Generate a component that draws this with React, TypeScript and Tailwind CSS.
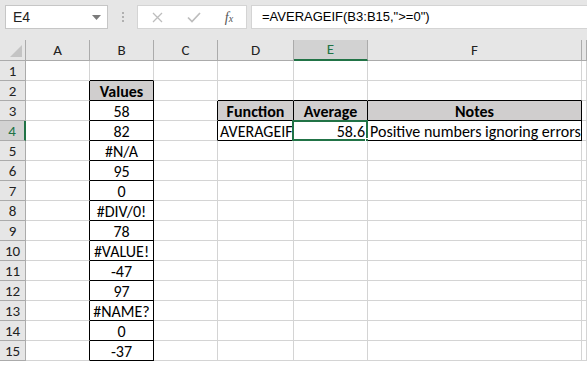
import React from 'react';

const FONT = { fontFamily: 'Carlito, Lato, "Liberation Sans", sans-serif' };

// column widths include the 1px right gridline
const columns = [
  { key: 'A', width: 'w-[64px]' },
  { key: 'B', width: 'w-[64px]' },
  { key: 'C', width: 'w-[64px]' },
  { key: 'D', width: 'w-[76px]' },
  { key: 'E', width: 'w-[74px]' },
  { key: 'F', width: 'w-[214px]' },
  { key: 'G', width: 'flex-1' },
];

type Cell = { text: string; align?: 'left' | 'center' | 'right'; head?: boolean };

const cells: Record<string, Cell> = {
  B2: { text: 'Values', head: true },
  B3: { text: '58' },
  B4: { text: '82' },
  B5: { text: '#N/A' },
  B6: { text: '95' },
  B7: { text: '0' },
  B8: { text: '#DIV/0!' },
  B9: { text: '78' },
  B10: { text: '#VALUE!' },
  B11: { text: '-47' },
  B12: { text: '97' },
  B13: { text: '#NAME?' },
  B14: { text: '0' },
  B15: { text: '-37' },
  D3: { text: 'Function', head: true },
  E3: { text: 'Average', head: true },
  F3: { text: 'Notes', head: true },
  D4: { text: 'AVERAGEIF', align: 'left' },
  E4: { text: '58.6', align: 'right' },
  F4: { text: 'Positive numbers ignoring errors', align: 'left' },
};

const inBox = (col: string, row: number) => {
  if (col === 'B' && row >= 2 && row <= 15) return true;
  if ((col === 'D' || col === 'E' || col === 'F') && (row === 3 || row === 4)) return true;
  return false;
};

const colKeys = columns.map(c => c.key);

function GridCell({ col, row, width }: { col: string; row: number; width: string }) {
  const next = colKeys[colKeys.indexOf(col) + 1];
  const rightBlack = inBox(col, row) || (next ? inBox(next, row) : false);
  const bottomBlack = inBox(col, row) || inBox(col, row + 1);
  const cell = cells[`${col}${row}`];
  const selected = col === 'E' && row === 4;
  const align = cell?.align ?? 'center';

  return (
    <div
      className={`relative h-full shrink-0 border-r border-b flex items-center pt-[2px] px-[2px] text-[16px] text-black ${width}
        ${rightBlack ? 'border-r-black' : 'border-r-[#d4d4d4]'}
        ${bottomBlack ? 'border-b-black' : 'border-b-[#d4d4d4]'}
        ${cell?.head ? 'bg-[#d0cece] font-bold' : 'bg-white'}
        ${align === 'left' ? 'justify-start' : align === 'right' ? 'justify-end' : 'justify-center'}`}
    >
      {cell && <span className="whitespace-nowrap leading-none">{cell.text}</span>}
      {selected && (
        <>
          <div className="absolute -left-[2px] -top-[1px] -right-[1px] -bottom-[1px] border-2 border-[#217346] pointer-events-none" />
          <div className="absolute -right-[3px] -bottom-[3px] w-[5px] h-[5px] bg-[#217346] border border-white" />
        </>
      )}
    </div>
  );
}

export default function App() {
  const rows = Array.from({ length: 15 }, (_, i) => i + 1);

  return (
    <div className="w-[587px] h-[366px] overflow-hidden bg-white select-none" style={FONT}>
      {/* Formula bar */}
      <div className="h-[40px] bg-[#e6e6e6] flex items-start pt-[5px] pl-[5px]">
        <div className="w-[103px] h-[24px] bg-white border border-[#c6c6c6] flex items-center justify-between pl-[7px] pr-[6px]">
          <span className="text-[14px] text-[#222]" style={{ fontFamily: '"Liberation Sans", sans-serif' }}>E4</span>
          <svg width="9" height="5" viewBox="0 0 9 5">
            <path d="M0 0 L9 0 L4.5 5 Z" fill="#7a7a7a" />
          </svg>
        </div>
        <div className="w-[29px] h-[24px] flex flex-col items-center justify-center gap-[2px]">
          <div className="w-[2px] h-[2px] bg-[#b0b0b0]" />
          <div className="w-[2px] h-[2px] bg-[#b0b0b0]" />
          <div className="w-[2px] h-[2px] bg-[#b0b0b0]" />
        </div>
        <div className="w-[110px] h-[24px] bg-white border border-[#d4d4d4] flex items-center">
          <div className="w-[38px] flex justify-center">
            <svg width="11" height="11" viewBox="0 0 11 11">
              <path d="M1 1 L10 10 M10 1 L1 10" stroke="#bdbdbd" strokeWidth="1.3" />
            </svg>
          </div>
          <div className="w-[36px] flex justify-center">
            <svg width="14" height="11" viewBox="0 0 14 11">
              <path d="M1 5.5 L5 9.5 L13 1" stroke="#bdbdbd" strokeWidth="1.7" fill="none" />
            </svg>
          </div>
          <div className="flex-1 flex justify-center">
            <span className="italic text-[14px] text-[#555]" style={{ fontFamily: '"Liberation Serif", serif' }}>
              f<span className="text-[10px]">x</span>
            </span>
          </div>
        </div>
        <div className="ml-[4px] flex-1 h-[24px] bg-white border border-[#d4d4d4] border-r-0 flex items-center pl-[10px]">
          <span className="text-[13px] text-black whitespace-nowrap" style={{ fontFamily: '"Liberation Sans", sans-serif' }}>
            =AVERAGEIF(B3:B15,"&gt;=0")
          </span>
        </div>
      </div>

      {/* Column headers */}
      <div className="h-[21px] flex bg-[#e6e6e6] text-[15px] text-[#222]">
        <div className="relative w-[26px] shrink-0 h-full border-r border-b border-[#ababab]">
          <svg className="absolute right-[3px] bottom-[3px]" width="12" height="12" viewBox="0 0 12 12">
            <path d="M12 0 L12 12 L0 12 Z" fill="#c4c4c4" />
          </svg>
        </div>
        {columns.map(c => (
          <div
            key={c.key}
            className={`shrink-0 h-full flex items-center justify-center border-r border-r-[#ababab] ${c.width}
              ${c.key === 'E' ? 'bg-[#d2d2d2] text-[#217346] border-b-2 border-b-[#217346]' : 'border-b border-b-[#ababab]'}`}
          >
            {c.key !== 'G' && c.key}
          </div>
        ))}
      </div>

      {/* Rows */}
      {rows.map(r => (
        <div key={r} className="h-[20px] flex">
          <div
            className={`w-[26px] shrink-0 h-full flex items-center justify-center pt-[2px] text-[15px] border-b border-b-[#ababab]
              ${r === 4 ? 'bg-[#d2d2d2] text-[#217346] border-r-2 border-r-[#217346]' : 'bg-[#e6e6e6] text-[#222] border-r border-r-[#ababab]'}`}
          >
            {r}
          </div>
          {columns.map(c => (
            <GridCell key={c.key} col={c.key} row={r} width={c.width} />
          ))}
        </div>
      ))}
    </div>
  );
}
